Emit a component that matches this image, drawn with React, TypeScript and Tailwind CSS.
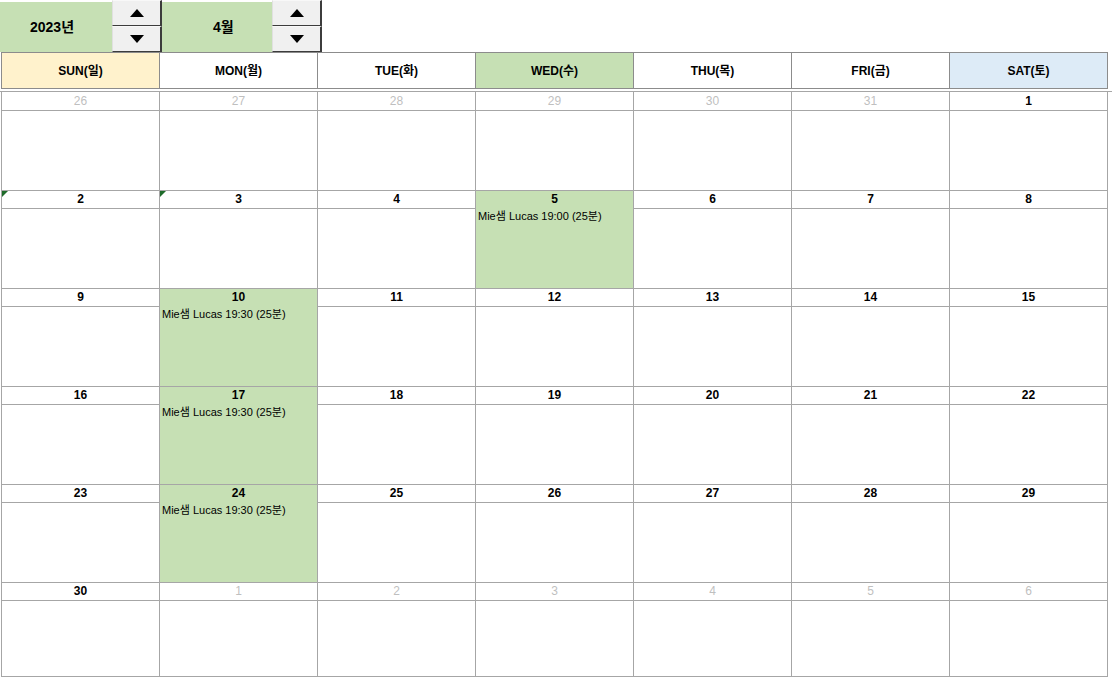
import React from "react";

type Day = { d: number; other?: boolean; event?: string; mark?: boolean };

const FONT = "font-['Liberation_Sans','Noto_Sans_CJK_KR',sans-serif]";

const HEADERS = [
  { label: "SUN(일)", bg: "bg-[#fff2cc]" },
  { label: "MON(월)", bg: "bg-white" },
  { label: "TUE(화)", bg: "bg-white" },
  { label: "WED(수)", bg: "bg-[#c6e0b4]" },
  { label: "THU(목)", bg: "bg-white" },
  { label: "FRI(금)", bg: "bg-white" },
  { label: "SAT(토)", bg: "bg-[#ddebf7]" },
];

const EV_A = "Mie샘 Lucas 19:00 (25분)";
const EV_B = "Mie샘 Lucas 19:30 (25분)";

const WEEKS: Day[][] = [
  [
    { d: 26, other: true },
    { d: 27, other: true },
    { d: 28, other: true },
    { d: 29, other: true },
    { d: 30, other: true },
    { d: 31, other: true },
    { d: 1 },
  ],
  [{ d: 2, mark: true }, { d: 3, mark: true }, { d: 4 }, { d: 5, event: EV_A }, { d: 6 }, { d: 7 }, { d: 8 }],
  [{ d: 9 }, { d: 10, event: EV_B }, { d: 11 }, { d: 12 }, { d: 13 }, { d: 14 }, { d: 15 }],
  [{ d: 16 }, { d: 17, event: EV_B }, { d: 18 }, { d: 19 }, { d: 20 }, { d: 21 }, { d: 22 }],
  [{ d: 23 }, { d: 24, event: EV_B }, { d: 25 }, { d: 26 }, { d: 27 }, { d: 28 }, { d: 29 }],
  [
    { d: 30 },
    { d: 1, other: true },
    { d: 2, other: true },
    { d: 3, other: true },
    { d: 4, other: true },
    { d: 5, other: true },
    { d: 6, other: true },
  ],
];

function Spinner() {
  const btn =
    "h-[26px] w-full flex items-center justify-center bg-[#f0f0f0] border border-t-[#f8f8f8] border-l-[#e0e0e0] border-r-[#3c3c3c] border-b-[#3c3c3c] border-r-2";
  return (
    <div className="w-[50px] h-[52px] flex flex-col">
      <div className={btn}>
        <svg width="14" height="8" viewBox="0 0 14 8">
          <path d="M7 0 L14 8 L0 8 Z" fill="#000" />
        </svg>
      </div>
      <div className={btn}>
        <svg width="14" height="8" viewBox="0 0 14 8">
          <path d="M0 0 L14 0 L7 8 Z" fill="#000" />
        </svg>
      </div>
    </div>
  );
}

function Cell({ day, first, last, col }: { day: Day; first: boolean; last: boolean; col: number }) {
  const green = !!day.event;
  const w = col === 6 ? "w-[159px] border-r" : "w-[158px]";
  return (
    <div className={`relative ${w} border-l border-[#a6a6a6] flex flex-col ${green ? "bg-[#c6e0b4]" : ""}`}>
      <div
        className={`${first ? "h-[19px]" : "h-[18px] pb-[2px]"} border-b ${
          green ? "border-[#c6e0b4]" : "border-[#a6a6a6]"
        } flex items-center justify-center text-[12px] leading-none ${
          day.other ? "text-[#bfbfbf] font-normal text-[11px]" : "text-black font-bold"
        }`}
      >
        {day.d}
      </div>
      {day.mark && (
        <span className="absolute top-0 left-0 w-0 h-0 border-t-[6px] border-t-[#1e6b2a] border-r-[6px] border-r-transparent" />
      )}
      <div
        className={`${last ? "h-[76px]" : "h-[80px]"} border-b border-[#a6a6a6] pl-[2px] pt-[1px] text-[11px] leading-[13px] text-black`}
      >
        {day.event}
      </div>
    </div>
  );
}

export default function App() {
  return (
    <div className={`w-[1112px] h-[678px] bg-white overflow-hidden ${FONT}`}>
      {/* year / month pickers */}
      <div className="flex h-[52px]">
        <div className="w-[112px] h-[50px] mt-[2px] bg-[#c6e0b4] flex items-center pl-[30px] text-[14px] font-bold text-black">
          2023년
        </div>
        <Spinner />
        <div className="w-[110px] h-[50px] mt-[2px] bg-[#c6e0b4] flex items-center pl-[51px] text-[14px] font-bold text-black">
          4월
        </div>
        <Spinner />
      </div>

      {/* weekday header */}
      <div className="flex ml-[1px] h-[37px]">
        {HEADERS.map((h, i) => (
          <div
            key={h.label}
            className={`${i === 6 ? "w-[159px] border-r" : "w-[158px]"} ${h.bg} border-l border-t border-b border-[#8c8c8c] flex items-center justify-center text-[12px] font-bold text-black`}
          >
            {h.label}
          </div>
        ))}
      </div>
      <div className="h-[2px]" />
      <div className="w-[1112px] border-t border-[#a6a6a6]" />

      {/* weeks */}
      {WEEKS.map((week, wi) => (
        <div key={wi} className="flex ml-[1px]">
          {week.map((day, ci) => (
            <Cell key={ci} day={day} col={ci} first={wi === 0} last={wi === WEEKS.length - 1} />
          ))}
        </div>
      ))}
    </div>
  );
}
